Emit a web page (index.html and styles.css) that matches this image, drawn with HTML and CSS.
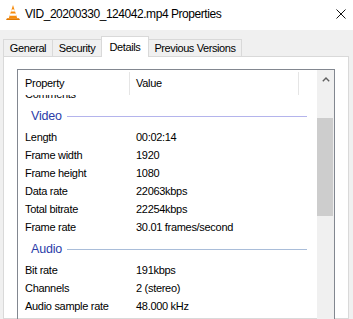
FILE: index.html
```html
<!DOCTYPE html>
<html>
<head>
<title>VID_20200330_124042.mp4 Properties</title>
<meta charset="UTF-8">
<link rel="stylesheet" href="styles.css">
</head>
<body>

<div class="titlebar">
  <svg class="appicon" width="16" height="16" viewBox="0 0 16 16">
    <path d="M2 14.2 L14 14.2 L15 16 L1 16 Z" fill="#e07800"/>
    <path d="M8 1 L12.3 14.5 L3.7 14.5 Z" fill="#f68b0c"/>
    <path d="M6.6 5.4 L9.4 5.4 L10.1 7.6 L5.9 7.6 Z" fill="#fff"/>
    <path d="M5.3 9.6 L10.7 9.6 L11.4 11.8 L4.6 11.8 Z" fill="#fff"/>
  </svg>
  <div class="title">VID_20200330_124042.mp4 Properties</div>
  <svg class="closebtn" width="10" height="10" viewBox="0 0 10 10">
    <path d="M0.5 0.5 L9.5 9.5 M9.5 0.5 L0.5 9.5" stroke="#111" stroke-width="1" fill="none"/>
  </svg>
</div>

<div class="tabstrip">
  <div class="tab tabGeneral">General</div>
  <div class="tab tabSecurity">Security</div>
  <div class="tab tabDetails selected">Details</div>
  <div class="tab tabPrevious">Previous Versions</div>
</div>

<div class="panel">
  <div class="listview">
    <div class="lvmain">
      <div class="lvhead">
        <div class="hcol hcolName">Property</div>
        <div class="hcol hcolValue">Value</div>
      </div>
      <div class="lvbody">
        <div class="rows">
          <div class="row"><span class="lbl">Comments</span><span class="val"></span></div>

          <div class="group"><span class="grouptxt">Video</span><span class="groupline lineVideo"></span></div>
          <div class="row"><span class="lbl">Length</span><span class="val">00:02:14</span></div>
          <div class="row"><span class="lbl">Frame width</span><span class="val">1920</span></div>
          <div class="row"><span class="lbl">Frame height</span><span class="val">1080</span></div>
          <div class="row"><span class="lbl">Data rate</span><span class="val">22063kbps</span></div>
          <div class="row"><span class="lbl">Total bitrate</span><span class="val">22254kbps</span></div>
          <div class="row"><span class="lbl">Frame rate</span><span class="val">30.01 frames/second</span></div>

          <div class="group"><span class="grouptxt">Audio</span><span class="groupline lineAudio"></span></div>
          <div class="row"><span class="lbl">Bit rate</span><span class="val">191kbps</span></div>
          <div class="row"><span class="lbl">Channels</span><span class="val">2 (stereo)</span></div>
          <div class="row"><span class="lbl">Audio sample rate</span><span class="val">48.000 kHz</span></div>
        </div>
      </div>
    </div>
    <div class="vscroll">
      <div class="sbup">
        <svg width="8" height="5" viewBox="0 0 8 5">
          <path d="M0.8 4.2 L4 1 L7.2 4.2" stroke="#606060" stroke-width="1.4" fill="none"/>
        </svg>
      </div>
      <div class="sbthumb"></div>
    </div>
  </div>
</div>

</body>
</html>
```

FILE: styles.css
```css
html, body {
  margin: 0;
  padding: 0;
  height: 100%;
  overflow: hidden;
}
body {
  background-color: #f0f0f0;
  font-family: "Liberation Sans", Arial, sans-serif;
  font-size: 11px;
  letter-spacing: -0.3px;
  color: #000;
  display: flex;
  flex-direction: column;
}

/* window caption */
.titlebar {
  box-sizing: border-box;
  height: 30px;
  background-color: #fff;
  display: flex;
  align-items: flex-start;
  padding: 4px 0 0 5px;
  flex: none;
}
.appicon {
  flex: none;
}
.title {
  flex: 1;
  margin-left: 4px;
  line-height: 20px;
  font-size: 12px;
  letter-spacing: -0.45px;
}
.closebtn {
  flex: none;
  margin: 5px 7px 0 0;
}

/* tabs */
.tabstrip {
  display: flex;
  align-items: flex-start;
  height: 17px;
  margin: 9px 0 0 3px;
  position: relative;
  z-index: 1;
  flex: none;
  letter-spacing: -0.4px;
}
.tab {
  box-sizing: border-box;
  height: 17px;
  border: 1px solid #d9d9d9;
  border-bottom: none;
  background-color: #f0f0f0;
  margin-right: -1px;
  display: flex;
  align-items: center;
  justify-content: center;
  white-space: nowrap;
}
.tabGeneral  { width: 50px; }
.tabSecurity { width: 50px; }
.tabDetails  { width: 48px; }
.tabPrevious { width: 94px; }
.tab.selected {
  background-color: #fff;
  height: 21px;
  margin-top: -3px;
  position: relative;
  z-index: 2;
  padding-bottom: 1px;
}

/* page */
.panel {
  flex: 1;
  min-height: 0;
  margin: 0 4px 0 3px;
  background-color: #fff;
  border: 1px solid #d9d9d9;
  padding: 12px 13px 0 13px;
}

.listview {
  height: 320px;
  border: 1px solid #828790;
  display: flex;
}
.lvmain {
  flex: 1;
  min-width: 0;
  display: flex;
  flex-direction: column;
}
.lvhead {
  display: flex;
  height: 25px;
  box-sizing: border-box;
  padding-top: 2px;
  flex: none;
  position: relative;
  z-index: 1;
  background-color: #fff;
}
.hcol {
  box-sizing: border-box;
  height: 23px;
  line-height: 23px;
  border-right: 1px solid #e5e5e5;
}
.hcolName  { width: 112px; padding-left: 7px; }
.hcolValue { width: 169px; padding-left: 6px; }

.lvbody {
  flex: 1;
  overflow: hidden;
}
.rows {
  margin-top: -10px; /* scrolled a little: top row is cut by the header */
}
.row {
  display: flex;
  height: 18px;
  line-height: 18px;
  white-space: nowrap;
}
.lbl {
  box-sizing: border-box;
  width: 111px;
  padding-left: 7px;
  flex: none;
}
.val {
  padding-left: 7px;
}

.group {
  display: flex;
  align-items: center;
  height: 18px;
  line-height: 18px;
  padding: 4px 10px 3px 13px;
}
.grouptxt {
  color: #2a3ca8;
  font-size: 12.5px;
  letter-spacing: -0.2px;
}
.groupline {
  flex: 1;
  height: 1px;
  margin-left: 5px;
}
.lineVideo { background-color: #b4b4ec; }
.lineAudio { background-color: #a9bdd9; }

/* scrollbar */
.vscroll {
  width: 17px;
  flex: none;
  background-color: #f0f0f0;
}
.sbup {
  height: 17px;
  display: flex;
  align-items: center;
  justify-content: center;
  padding-top: 2px;
  box-sizing: border-box;
}
.sbup svg {
  display: block;
}
.sbthumb {
  margin: 31px 1px 0 0;
  height: 98px;
  background-color: #cdcdcd;
}
```
